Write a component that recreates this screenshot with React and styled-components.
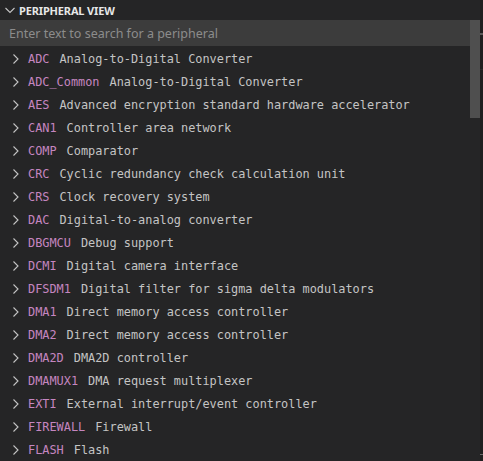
import React from "react";
import styled, { createGlobalStyle } from "styled-components";

const Global = createGlobalStyle`
  html, body { margin: 0; padding: 0; background: #252526; }
  body { width: 483px; height: 461px; overflow: hidden; }
`;

const Frame = styled.div`
  display: flex;
  width: 483px;
  height: 461px;
  background: #252526;
  overflow: hidden;
`;

const Panel = styled.div`
  display: flex;
  flex-direction: column;
  width: 480px;
  height: 100%;
`;

const Edge = styled.div`
  position: relative;
  width: 3px;
  height: 100%;
  background: #1f1f1f;
`;

const EdgeMark = styled.div`
  position: absolute;
  left: 0;
  right: 0;
  top: ${(p) => p.$top}px;
  height: ${(p) => p.$h}px;
  background: ${(p) => p.$color};
`;

const Header = styled.div`
  display: flex;
  align-items: center;
  height: 20px;
  flex: none;
  padding-left: 4px;
  gap: 3px;
  color: #e7e7e7;
  font-family: "Noto Sans", "Open Sans", sans-serif;
  font-weight: 700;
  font-size: 11px;
  letter-spacing: -0.15px;
`;

const Body = styled.div`
  position: relative;
  flex: 1;
  overflow: hidden;
`;

const Search = styled.div`
  height: 26px;
  background: #3c3c3c;
  display: flex;
  align-items: center;
  padding-left: 9px;
  color: #8c8c8c;
  font-family: "Noto Sans", "Open Sans", sans-serif;
  font-size: 12.5px;
`;

const List = styled.div`
  display: flex;
  flex-direction: column;
  padding-top: 1px;
`;

const Row = styled.div`
  display: flex;
  align-items: center;
  height: 23px;
  padding-left: 11px;
  font-family: "DejaVu Sans Mono", "Liberation Mono", monospace;
  font-size: 11.88px;
  white-space: nowrap;
`;

const Chevron = styled.svg`
  width: 10px;
  height: 12px;
  margin-right: 7px;
  flex: none;
`;

const Name = styled.span`
  color: #c586c0;
`;

const Desc = styled.span`
  color: #c4c4c4;
  margin-left: 10px;
`;

const Thumb = styled.div`
  position: absolute;
  top: 0;
  right: 0;
  width: 10px;
  height: 98px;
  background: #4f4f4f;
`;

const items = [
  ["ADC", "Analog-to-Digital Converter"],
  ["ADC_Common", "Analog-to-Digital Converter"],
  ["AES", "Advanced encryption standard hardware accelerator"],
  ["CAN1", "Controller area network"],
  ["COMP", "Comparator"],
  ["CRC", "Cyclic redundancy check calculation unit"],
  ["CRS", "Clock recovery system"],
  ["DAC", "Digital-to-analog converter"],
  ["DBGMCU", "Debug support"],
  ["DCMI", "Digital camera interface"],
  ["DFSDM1", "Digital filter for sigma delta modulators"],
  ["DMA1", "Direct memory access controller"],
  ["DMA2", "Direct memory access controller"],
  ["DMA2D", "DMA2D controller"],
  ["DMAMUX1", "DMA request multiplexer"],
  ["EXTI", "External interrupt/event controller"],
  ["FIREWALL", "Firewall"],
  ["FLASH", "Flash"],
];

export default function App() {
  return (
    <>
      <Global />
      <Frame>
        <Panel>
          <Header>
            <svg width="12" height="12" viewBox="0 0 12 12">
              <path d="M1.5 4 L6 8.5 L10.5 4" fill="none" stroke="#c5c5c5" strokeWidth="1.1" />
            </svg>
            <span>PERIPHERAL VIEW</span>
          </Header>
          <Body>
            <Search>Enter text to search for a peripheral</Search>
            <List>
              {items.map(([n, d]) => (
                <Row key={n}>
                  <Chevron viewBox="0 0 10 12">
                    <path d="M2.5 1.5 L7 6 L2.5 10.5" fill="none" stroke="#c5c5c5" strokeWidth="1.1" />
                  </Chevron>
                  <Name>{n}</Name>
                  <Desc>{d}</Desc>
                </Row>
              ))}
            </List>
            <Thumb />
          </Body>
        </Panel>
        <Edge>
          <EdgeMark $top={33} $h={2} $color="#5a5a5a" />
          <EdgeMark $top={69} $h={1} $color="#2b2b2b" />
          <EdgeMark $top={454} $h={1} $color="#6a6a6a" />
        </Edge>
      </Frame>
    </>
  );
}
